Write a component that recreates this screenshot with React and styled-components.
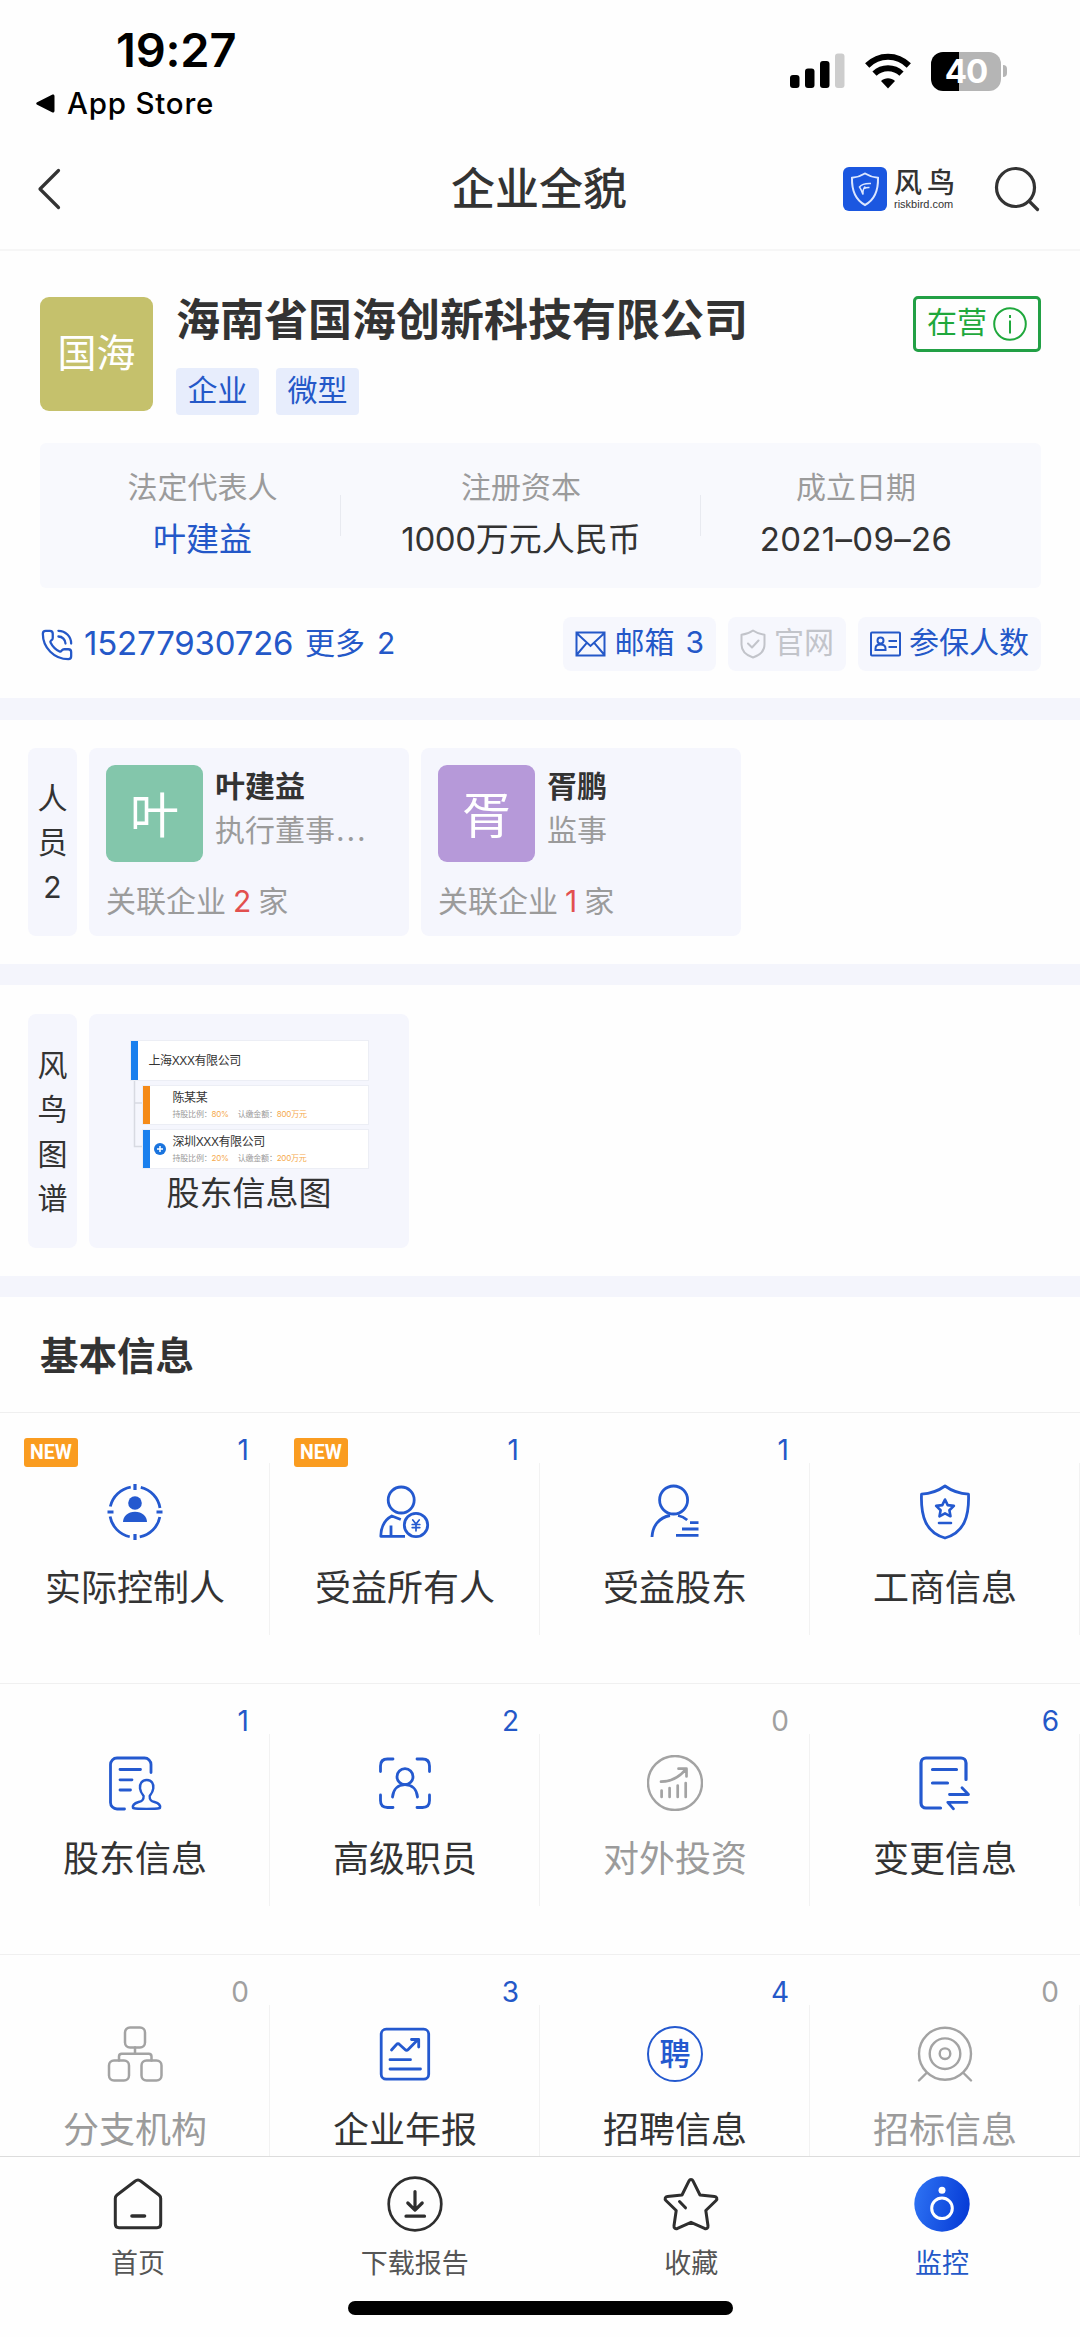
import React from 'react'
import styled, { createGlobalStyle } from 'styled-components'
import { PhoneCall } from 'lucide-react'

const BLUE = '#2458c8'
const GREY = '#9b9b9b'

const people = [
  { short: '叶', name: '叶建益', role: '执行董事', cut: true, count: 2, color: '#83c6ab' },
  { short: '胥', name: '胥鹏', role: '监事', count: 1, color: '#b699d9' },
]

const Icon = ({ children, width = 2.8 }) => (
  <svg width="56" height="56" viewBox="0 0 56 56" fill="none" stroke="currentColor" strokeWidth={width} strokeLinecap="round" strokeLinejoin="round">
    {children}
  </svg>
)

const ControllerIcon = () => (
  <Icon>
    <g strokeLinecap="butt">
      <circle cx="28" cy="28" r="25.3" strokeDasharray="29.44 10.3" strokeDashoffset="-5.15" />
      <path d="M28 0v6M28 50v6M.5 28h6M49.500 28h6" strokeWidth="3.2" />
    </g>
    <circle cx="28" cy="19" r="6.800" fill="currentColor" stroke="none" />
    <path d="M16 38c0-6 5-10.300 12-10.300s12 4.300 12 10.300z" fill="currentColor" stroke="none" />
  </Icon>
)
const OwnerIcon = () => (
  <Icon>
    <circle cx="24.200" cy="16" r="13" />
    <path d="M28 52.300H3.800C4 43 8 35.500 14.800 32l9 3.500M14 41.500v10" strokeLinecap="butt" />
    <circle cx="39" cy="41" r="11.700" />
    <path d="M35.800 36l3.200 4 3.200-4M35.200 40.500h7.600M35.200 43.600h7.600M39 40.200v6.600" strokeWidth="1.700" />
  </Icon>
)
const HolderIcon = () => (
  <Icon>
    <circle cx="26.600" cy="16" r="14" />
    <g strokeLinecap="butt">
      <path d="M5 53c.5-11 7-19.500 18-21.500M31 31.500c3.500.7 6.500 2.200 9.200 4.500" />
      <path d="M43 38.600h8.500M35 45h16.500M29 51.400h22.500" />
    </g>
  </Icon>
)
const BusinessIcon = () => (
  <Icon>
    <path d="M28 2c-6.500 4.700-14 7.600-23.500 8.200C3.700 32 8.500 48.500 28 54c19.500-5.500 24.300-22 23.500-43.800C42 9.600 34.500 6.700 28 2z" />
    <path d="M28 15.500l2.700 5.600 6.200.8-4.500 4.300 1.100 6.100-5.500-3-5.500 3 1.100-6.100-4.500-4.300 6.200-.8zM22 39h12" strokeWidth="2.600" />
  </Icon>
)
const ShareholderIcon = () => (
  <Icon>
    <path d="M44 17.500V9.500a6.500 6.500 0 0 0-6.500-6.500H10A6.500 6.500 0 0 0 3.500 9.500v38A6.500 6.500 0 0 0 10 54h7.500M13 14.500h20.500M13 24.800h12M13 35h10.500" />
    <path d="M39.800 25c-5 0-7.300 3.800-6.800 8.300.3 3.200 1.700 5.200 3.600 7.700.2 3.500-1 5-5 6-3.500 1-6.500 2.500-5.600 6 5 1.200 22 1.200 27 0 .9-3.500-2-5-5.500-6-4-1-5-2.500-4.800-6 1.900-2.500 3.300-4.500 3.600-7.700.5-4.500-1.500-8.300-6.500-8.300z" strokeWidth="2.400" />
  </Icon>
)
const StaffIcon = () => (
  <Icon>
    <path d="M3.500 16.500V11c0-4.500 2.500-7 7-7H16M40 4h5.500c4.500 0 7 2.500 7 7v5.500M52.500 40v5.500c0 4.500-2.500 7-7 7H40M16 52.500h-5.500c-4.500 0-7-2.500-7-7V40" />
    <circle cx="28" cy="21.700" r="8" />
    <path d="M15.500 42c.8-7.500 5.500-12.300 12.500-12.300S39.700 34.500 40.500 42" />
  </Icon>
)
const InvestIcon = () => (
  <Icon>
    <circle cx="28" cy="28" r="27" strokeWidth="2.400" />
    <path d="M14.600 35.500v6.500M22.600 33v9M30.700 30.500v11.500M38.700 28v14M14 26.700c9 0 17.500-3.500 25-12.500M31.500 13.700h8v7.800" strokeWidth="2.700" />
  </Icon>
)
const ChangeIcon = () => (
  <Icon width={3.200}>
    <path d="M49 24.500V8a5 5 0 0 0-5-5H9a5 5 0 0 0-5 5v40a5 5 0 0 0 5 5h14.500M15.500 14.500h24M15.500 28h15" />
    <path d="M32.500 39.500H51.500L45 32.800M50 47.300H30.800l5.700 6.500" strokeWidth="2.800" />
  </Icon>
)
const BranchIcon = () => (
  <Icon width={2.500}>
    <rect x="18" y="1.500" width="20" height="20" rx="5" />
    <rect x="2" y="34.500" width="20" height="20" rx="5" />
    <rect x="34.500" y="34.500" width="20" height="20" rx="5" />
    <path d="M28 21.500v6M12 34.500v-4c0-2 1-2.800 2.800-2.800H41.700c1.800 0 2.800.8 2.800 2.800v4" />
  </Icon>
)
const ReportIcon = () => (
  <Icon>
    <rect x="4.200" y="3.200" width="47.500" height="50" rx="5" />
    <path d="M14.500 24l5-5.500c1-1.200 2-1.200 3 0l5.500 5c1 1 2.200 1 3.200 0l9.300-9.500M34.500 13.500h7.200v7.500M13 33.700h20.500M13 43h30.500" />
  </Icon>
)
const JobsIcon = () => (
  <JobRing>聘</JobRing>
)
const BidIcon = () => (
  <Icon width={2.400}>
    <circle cx="28" cy="27.700" r="26" />
    <circle cx="28" cy="27.700" r="15.300" />
    <circle cx="28" cy="27.700" r="5.300" />
    <path d="M9.500 47l-7.500 7.500M46.500 47l7.500 7.500" />
  </Icon>
)

const modules = [
  { label: '实际控制人', count: 1, icon: ControllerIcon, isNew: true },
  { label: '受益所有人', count: 1, icon: OwnerIcon, isNew: true },
  { label: '受益股东', count: 1, icon: HolderIcon },
  { label: '工商信息', icon: BusinessIcon },
  { label: '股东信息', count: 1, icon: ShareholderIcon },
  { label: '高级职员', count: 2, icon: StaffIcon },
  { label: '对外投资', count: 0, icon: InvestIcon },
  { label: '变更信息', count: 6, icon: ChangeIcon },
  { label: '分支机构', count: 0, icon: BranchIcon },
  { label: '企业年报', count: 3, icon: ReportIcon },
  { label: '招聘信息', count: 4, icon: JobsIcon },
  { label: '招标信息', count: 0, icon: BidIcon },
]

const tabs = [
  {
    label: '首页',
    icon: (
      <Icon width={3}>
        <path d="M25 5.200L7 19c-1.200 1-1.700 2-1.700 3.500V48c0 2.500 1.200 3.700 3.700 3.700h38c2.500 0 3.700-1.200 3.700-3.700V22.500c0-1.500-.5-2.500-1.700-3.500L31 5.200c-2-1.600-4-1.600-6 0z" />
        <path d="M22 40h12.500" strokeWidth="3.600" />
      </Icon>
    ),
  },
  {
    label: '下载报告',
    icon: (
      <Icon width={2.700}>
        <circle cx="28" cy="28" r="26.300" />
        <path d="M28 15.500V34M20.800 27l7.200 7.200 7.200-7.200M19 40.200h18.500" strokeWidth="3.200" />
      </Icon>
    ),
  },
  {
    label: '收藏',
    icon: (
      <Icon width={3}>
        <path d="M26 4.800c.9-1.800 3.100-1.800 4 0l7 14.200 14.600 1.400c2.200.3 3 2.600 1.500 4.100L42.800 34.500l2.200 15.300c.3 2.200-1.500 3.500-3.500 2.500L28 46.300l-13.500 6c-2 1-3.800-.3-3.500-2.500l2.200-15.300L2.900 24.500c-1.500-1.500-.7-3.800 1.500-4.100l14.600-1.400zM16.500 25.500l6 6.300" />
      </Icon>
    ),
  },
  {
    label: '监控',
    active: true,
    icon: (
      <svg width="56" height="56" viewBox="0 0 56 56">
        <defs>
          <linearGradient id="monitor" x1="0" y1="0.400" x2="1" y2="0.600">
            <stop offset="0" stopColor="#2c70f2" />
            <stop offset="1" stopColor="#063bd6" />
          </linearGradient>
        </defs>
        <circle cx="28" cy="28" r="27.700" fill="url(#monitor)" />
        <circle cx="28" cy="14.300" r="3.500" fill="#fff" />
        <circle cx="28" cy="32.300" r="10.300" fill="none" stroke="#fff" strokeWidth="3" />
      </svg>
    ),
  },
]

const StatusIcons = () => (
  <SystemIcons>
    <svg width="55" height="36" viewBox="0 0 55 36">
      <rect x="0" y="22" width="9.500" height="13" rx="3" />
      <rect x="15" y="15.500" width="9.500" height="19.500" rx="3" />
      <rect x="30" y="8" width="9.500" height="27" rx="3" />
      <rect x="45" y=".5" width="9.500" height="34.500" rx="3" fill="#cdcdcd" />
    </svg>
    <svg width="46" height="36" viewBox="0 0 46 36" fill="none" stroke="#000" strokeWidth="6">
      <path d="M2.200 12.500C14 .8 32 .8 43.800 12.500" />
      <path d="M9.500 20.700c7.500-7.300 19.500-7.300 27 0" />
      <path d="M23 35.500l-7-7.500c4-3.700 10-3.700 14 0z" fill="#000" stroke="none" />
    </svg>
    <BatteryWrap>
      <Battery>40</Battery>
      <BatteryTip />
    </BatteryWrap>
  </SystemIcons>
)

const PersonCard = ({ person }) => (
  <Card>
    <PersonTop>
      <Avatar $color={person.color}>{person.short}</Avatar>
      <div>
        <PersonName>{person.name}</PersonName>
        <PersonRole>
          {person.role}
          {person.cut && <Dots>...</Dots>}
        </PersonRole>
      </div>
    </PersonTop>
    <Related>
      关联企业<b>{person.count}</b>家
    </Related>
  </Card>
)

const SubLine = ({ percent, amount }) => (
  <ThumbSub>
    <span>持股比例：<em>{percent}</em></span>
    <span>认缴金额：<em>{amount}</em></span>
  </ThumbSub>
)

const ShareholderThumb = () => (
  <Thumb>
    <ThumbRow $color="#1a80ee">
      <ThumbName>上海XXX有限公司</ThumbName>
    </ThumbRow>
    <ThumbTree>
      <svg width="12" height="82" viewBox="0 0 12 82" fill="none" stroke="#d8dae2" strokeWidth="1.500">
        <path d="M3.500 0v66.500h8M3.500 23h8" />
      </svg>
      <ThumbRows>
        <ThumbRow $color="#f58a17" $inner>
          <ThumbName>陈某某</ThumbName>
          <SubLine percent="80%" amount="800万元" />
        </ThumbRow>
        <ThumbRow $color="#1a80ee" $inner>
          <Plus>
            <svg width="12" height="12" viewBox="0 0 12 12">
              <circle cx="6" cy="6" r="6" fill="#1a74de" />
              <path d="M6 3v6M3 6h6" stroke="#fff" strokeWidth="1.500" />
            </svg>
          </Plus>
          <ThumbName>深圳XXX有限公司</ThumbName>
          <SubLine percent="20%" amount="200万元" />
        </ThumbRow>
      </ThumbRows>
    </ThumbTree>
  </Thumb>
)

const App = () => (
  <Screen>
    <GlobalStyle />
    <StatusBar>
      <div>
        <Time>19:27</Time>
        <BackTo>
          <svg width="19" height="19" viewBox="0 0 19 19">
            <path d="M1.200 8.200L16 .8c1.500-.7 2.500 0 2.500 1.500v14.500c0 1.500-1 2.200-2.500 1.500L1.200 10.800c-1.300-.8-1.300-1.900 0-2.600z" />
          </svg>
          App Store
        </BackTo>
      </div>
      <StatusIcons />
    </StatusBar>

    <Header>
      <HeaderSide>
        <svg width="24" height="42" viewBox="0 0 24 42" fill="none" stroke="#333" strokeWidth="3.200" strokeLinecap="round" strokeLinejoin="round">
          <path d="M21.500 2.500L3 21l18.500 18.500" />
        </svg>
      </HeaderSide>
      <Title>企业全貌</Title>
      <HeaderSide $end>
        <svg width="44" height="44" viewBox="0 0 44 44" fill="none">
          <rect width="44" height="44" rx="6" fill="#1b57e0" />
          <path d="M22 6.500c-4 2.500-8 3.800-13 4.300C8.700 22 11.500 32.500 22 38c10.500-5.500 13.300-16 13-27.200-5-.5-9-1.800-13-4.300z" stroke="#dbe6ff" strokeWidth="2" />
          <path d="M28 16.500c-6-.3-9.500.8-11.500 3.500 1.500 2 2.300 4 3.500 7.500-.3-4 .5-6.500 2.300-8M21 21.500c2-1 3.500-1.200 5.500-1" stroke="#dbe6ff" strokeWidth="1.500" />
        </svg>
        <Brand>
          <BrandName>风鸟</BrandName>
          <BrandUrl>riskbird.com</BrandUrl>
        </Brand>
        <svg width="47" height="46" viewBox="0 0 47 46" fill="none" stroke="#333" strokeWidth="3.200" strokeLinecap="round">
          <circle cx="21.500" cy="21.500" r="19" />
          <path d="M35.500 35.500l8 8" />
        </svg>
      </HeaderSide>
    </Header>

    <Content>
      <Company>
        <CompanyHead>
          <CompanyLogo>国海</CompanyLogo>
          <CompanyMain>
            <CompanyName>海南省国海创新科技有限公司</CompanyName>
            <Tags>
              <Tag>企业</Tag>
              <Tag>微型</Tag>
            </Tags>
          </CompanyMain>
          <Status>
            <StatusText>在营</StatusText>
            <svg width="34" height="34" viewBox="0 0 34 34" fill="none" stroke="currentColor" strokeWidth="2">
              <circle cx="17" cy="17" r="15.800" />
              <path d="M17 13.500v13M17 8v3" />
            </svg>
          </Status>
        </CompanyHead>

        <Facts>
          <Fact>
            <FactLabel>法定代表人</FactLabel>
            <FactValue $link>叶建益</FactValue>
          </Fact>
          <Fact>
            <FactLabel>注册资本</FactLabel>
            <FactValue><Amount>1000</Amount>万元人民币</FactValue>
          </Fact>
          <Fact>
            <FactLabel>成立日期</FactLabel>
            <FactValue $date>2021–09–26</FactValue>
          </Fact>
        </Facts>

        <Contacts>
          <Phone>
            <PhoneCall size={34} strokeWidth={1.600} />
            <PhoneNumber>15277930726</PhoneNumber>
            <More>更多<i>2</i></More>
          </Phone>
          <Chip>
            <svg width="31" height="26" viewBox="0 0 31 26" fill="none" stroke="currentColor" strokeWidth="2">
              <path d="M1.500 1.500h28v23h-28zM1.500 2l14 13 14-13M1.500 24l10.300-12.200M29.500 24L19.200 11.800" />
            </svg>
            <ChipText>邮箱<i>3</i></ChipText>
          </Chip>
          <Chip $disabled>
            <svg width="26" height="30" viewBox="0 0 26 30" fill="none" stroke="currentColor" strokeWidth="2" strokeLinecap="round" strokeLinejoin="round">
              <path d="M13 1.500C9.500 4 6 5.300 1.500 5.700v9.800c0 6 4 10.500 11.500 13 7.500-2.500 11.500-7 11.500-13V5.700C20 5.300 16.500 4 13 1.500zM8 14.500l4 4 6.500-7" />
            </svg>
            <ChipText>官网</ChipText>
          </Chip>
          <Chip>
            <svg width="31" height="26" viewBox="0 0 31 26" fill="none" stroke="currentColor" strokeWidth="2">
              <rect x="1" y="1.500" width="29" height="23" rx="1" />
              <circle cx="10.500" cy="9.500" r="3" />
              <path d="M5.500 19v-1.500c0-2.500 2-4 5-4s5 1.500 5 4V19zM18.500 10h8.500M18.500 16h8.500" />
            </svg>
            <ChipText>参保人数</ChipText>
          </Chip>
        </Contacts>
      </Company>

      <Band $height={22} />

      <Section>
        <SideLabel>
          <span>人</span>
          <span>员</span>
          <span>2</span>
        </SideLabel>
        {people.map((person) => (
          <PersonCard key={person.name} person={person} />
        ))}
      </Section>

      <Band $height={21} />

      <Section $tall>
        <SideLabel>
          <span>风</span>
          <span>鸟</span>
          <span>图</span>
          <span>谱</span>
        </SideLabel>
        <ChartCard>
          <ShareholderThumb />
          <ChartName>股东信息图</ChartName>
        </ChartCard>
      </Section>

      <Band $height={21} />

      <SectionTitle>基本信息</SectionTitle>
      <Grid>
        {modules.map(({ label, count, icon: ModuleIcon, isNew }) => (
          <Cell key={label} $empty={count === 0}>
            {isNew && <NewBadge>NEW</NewBadge>}
            {count !== undefined && <Count $empty={count === 0}>{count}</Count>}
            <CellIcon $empty={count === 0}>
              <ModuleIcon />
            </CellIcon>
            <CellLabel>{label}</CellLabel>
          </Cell>
        ))}
      </Grid>
    </Content>

    <TabBar>
      <Tabs>
        {tabs.map((tab) => (
          <Tab key={tab.label}>
            {tab.icon}
            <TabLabel $active={tab.active}>{tab.label}</TabLabel>
          </Tab>
        ))}
      </Tabs>
      <HomeIndicator />
    </TabBar>
  </Screen>
)

export default App

const GlobalStyle = createGlobalStyle`
* {
  box-sizing: border-box;
}
body {
  margin: 0;
  background: #fff;
}
svg {
  display: block;
  flex: none;
}
i, em {
  font-style: normal;
}
`
const Screen = styled.div`
width: 1080px;
height: 2337px;
display: flex;
flex-direction: column;
overflow: hidden;
background: #fefefe;
color: #333;
font-family: Inter, "Noto Sans CJK SC", sans-serif;
white-space: nowrap;
`
const StatusBar = styled.div`
height: 126px;
flex: none;
display: flex;
justify-content: space-between;
padding: 25px 73px 0 36px;
color: #000;
`
const Time = styled.div`
padding-left: 80px;
font-size: 47px;
font-weight: 600;
line-height: 50px;
letter-spacing: -0.2px;
`
const BackTo = styled.div`
display: flex;
align-items: center;
gap: 12px;
margin-top: 13px;
font-size: 29.500px;
font-weight: 500;
line-height: 30px;
letter-spacing: 0.8px;
`
const SystemIcons = styled.div`
display: flex;
align-items: center;
gap: 20px;
height: 42px;
margin-top: 25px;
`
const BatteryWrap = styled.div`
display: flex;
align-items: center;
gap: 2px;
`
const Battery = styled.div`
width: 70px;
height: 39px;
border-radius: 12px;
background: linear-gradient(90deg, #000 40%, #b5b5b5 40%);
color: #fff;
font-size: 33px;
font-weight: 700;
line-height: 39px;
text-align: center;
letter-spacing: -1px;
`
const BatteryTip = styled.div`
width: 4px;
height: 12px;
border-radius: 0 5px 5px 0;
background: #b5b5b5;
`
const Header = styled.div`
height: 125px;
flex: none;
display: grid;
grid-template-columns: 1fr auto 1fr;
align-items: center;
padding: 2px 39px 0 37px;
border-bottom: 2px solid #f6f6f6;
`
const HeaderSide = styled.div`
display: flex;
align-items: center;
justify-content: ${({ $end }) => ($end ? 'flex-end' : 'flex-start')};
`
const Title = styled.div`
font-size: 44px;
font-weight: 500;
line-height: 60px;
`
const Brand = styled.div`
width: 62px;
margin: 0 38px 0 7px;
`
const BrandName = styled.div`
font-size: 28px;
font-weight: 500;
line-height: 30px;
letter-spacing: 5px;
`
const BrandUrl = styled.div`
font-family: "Liberation Sans", sans-serif;
font-size: 11px;
line-height: 12px;
`
const Content = styled.div`
flex: 1;
min-height: 0;
overflow: hidden;
`
const Company = styled.div`
padding: 46px 39px 27px 40px;
`
const CompanyHead = styled.div`
display: flex;
align-items: flex-start;
height: 118px;
`
const CompanyLogo = styled.div`
width: 113px;
height: 114px;
border-radius: 9px;
background: #c5c16c;
color: #fff;
font-size: 39px;
line-height: 112px;
text-align: center;
`
const CompanyMain = styled.div`
flex: 1;
margin-left: 23px;
`
const CompanyName = styled.div`
font-size: 44px;
font-weight: 600;
line-height: 47px;
`
const Tags = styled.div`
display: flex;
gap: 17px;
margin-top: 24px;
`
const Tag = styled.div`
width: 83px;
height: 47px;
border-radius: 4px;
background: #e7edfc;
color: ${BLUE};
font-size: 30px;
line-height: 45px;
text-align: center;
`
const Status = styled.div`
display: flex;
align-items: center;
justify-content: center;
gap: 6px;
width: 128px;
height: 56px;
margin-top: -1px;
border: 3px solid #22a045;
border-radius: 5px;
color: #1fa83c;
`
const StatusText = styled.span`
padding-bottom: 4px;
font-size: 30px;
line-height: 46px;
`
const Facts = styled.div`
height: 145px;
display: grid;
grid-template-columns: 277px 360px 310px;
margin-top: 28px;
padding: 24px 0 0 24px;
border-radius: 6px;
background: #f8f9fd;
`
const Fact = styled.div`
text-align: center;
background: linear-gradient(#e8eaf0, #e8eaf0) right 28px / 1px 41px no-repeat;
&:last-child {
  background: none;
}
`
const FactLabel = styled.div`
color: ${GREY};
font-size: 30px;
line-height: 40px;
`
const FactValue = styled.div`
margin-top: 12px;
color: ${({ $link }) => ($link ? BLUE : '#333')};
font-size: 33px;
line-height: 40px;
letter-spacing: ${({ $date }) => ($date ? '0.300px' : '0')};
`
const Amount = styled.span`
letter-spacing: -0.400px;
`
const Contacts = styled.div`
display: flex;
align-items: center;
gap: 12px;
height: 54px;
margin-top: 29px;
`
const Phone = styled.div`
flex: 1;
display: flex;
align-items: center;
color: ${BLUE};
svg {
  margin-top: 2px;
}
`
const PhoneNumber = styled.div`
width: 210px;
margin-left: 10px;
padding-bottom: 2px;
font-size: 33px;
line-height: 50px;
letter-spacing: -0.200px;
`
const More = styled.div`
margin-left: 11px;
padding-bottom: 3px;
font-size: 30px;
line-height: 50px;
i {
  margin-left: 12px;
}
`
const Chip = styled.div`
display: flex;
align-items: center;
justify-content: center;
gap: 8px;
height: 54px;
padding: 0 12px;
border-radius: 8px;
background: #f6f7fd;
color: ${({ $disabled }) => ($disabled ? '#c2c4ca' : BLUE)};
`
const ChipText = styled.span`
padding-bottom: 4px;
font-size: 30px;
line-height: 50px;
i {
  margin-left: 11px;
}
`
const Band = styled.div`
height: ${({ $height }) => $height}px;
background: #f4f5fc;
`
const Section = styled.div`
display: flex;
gap: 12px;
height: ${({ $tall }) => ($tall ? 291 : 244)}px;
padding: ${({ $tall }) => ($tall ? 29 : 28)}px 28px 28px;
`
const SideLabel = styled.div`
width: 49px;
display: flex;
flex-direction: column;
align-items: center;
justify-content: center;
padding-top: 1px;
border-radius: 8px;
background: #f5f6fd;
font-size: 30px;
line-height: 44.500px;
`
const Card = styled.div`
width: 320px;
padding: 17px;
border-radius: 8px;
background: #f5f6fd;
`
const PersonTop = styled.div`
display: flex;
gap: 12px;
`
const Avatar = styled.div`
width: 97px;
height: 97px;
border-radius: 9px;
background: ${({ $color }) => $color};
color: #fff;
font-size: 49px;
line-height: 101px;
text-align: center;
`
const PersonName = styled.div`
font-size: 30px;
font-weight: 600;
line-height: 43px;
`
const PersonRole = styled.div`
color: ${GREY};
font-size: 30px;
line-height: 44px;
`
const Dots = styled.span`
margin-left: 1px;
letter-spacing: 1.900px;
`
const Related = styled.div`
margin-top: 19px;
color: ${GREY};
font-size: 30px;
line-height: 40px;
b {
  margin: 0 7px;
  color: #e2504f;
  font-weight: 400;
}
`
const ChartCard = styled.div`
width: 320px;
display: flex;
flex-direction: column;
align-items: center;
padding-top: 27px;
border-radius: 8px;
background: #f5f6fd;
`
const ChartName = styled.div`
margin-top: 4px;
font-size: 33px;
line-height: 42px;
`
const Thumb = styled.div`
width: 237px;
`
const ThumbTree = styled.div`
display: flex;
height: 88px;
`
const ThumbRows = styled.div`
flex: 1;
display: flex;
flex-direction: column;
gap: 6px;
padding-top: 6px;
`
const ThumbRow = styled.div`
position: relative;
height: ${({ $inner }) => ($inner ? 38 : 39)}px;
display: flex;
flex-direction: column;
justify-content: center;
padding-left: ${({ $inner }) => ($inner ? 30 : 18)}px;
background: linear-gradient(90deg, ${({ $color }) => $color} 7px, #fff 7px);
box-shadow: 0 0 0 1px #eceef5;
`
const ThumbName = styled.div`
font-family: "Liberation Sans", "Noto Sans CJK SC", sans-serif;
font-size: 12px;
line-height: 18px;
letter-spacing: -0.400px;
`
const ThumbSub = styled.div`
display: flex;
gap: 9px;
color: #999;
font-size: 8px;
line-height: 14px;
letter-spacing: -0.200px;
em {
  color: #f5a94c;
}
`
const Plus = styled.div`
position: absolute;
left: 11px;
top: 13px;
`
const SectionTitle = styled.div`
height: 116px;
padding-left: 40px;
border-bottom: 1px solid #efefef;
font-size: 38.500px;
font-weight: 600;
line-height: 119px;
`
const Grid = styled.div`
display: grid;
grid-template-columns: repeat(4, 270px);
`
const Cell = styled.div`
position: relative;
height: 271px;
display: flex;
flex-direction: column;
align-items: center;
padding-top: 71px;
border-bottom: 1px solid #f0f0f0;
background: linear-gradient(#f2f2f2, #f2f2f2) right 50px / 1px 172px no-repeat;
color: ${({ $empty }) => ($empty ? '#9b9b9b' : '#333')};
`
const Count = styled.div`
position: absolute;
top: 21px;
right: 21px;
color: ${({ $empty }) => ($empty ? '#a0a0a0' : BLUE)};
font-size: 28px;
line-height: 33px;
`
const NewBadge = styled.div`
position: absolute;
top: 25px;
left: 24px;
width: 54px;
height: 29px;
border-radius: 3px;
background: #fa9c20;
color: #fff;
font-family: Roboto, sans-serif;
font-size: 19.500px;
font-weight: 700;
line-height: 30px;
text-align: center;
`
const CellIcon = styled.div`
color: ${({ $empty }) => ($empty ? '#a3a3a3' : '#2459cf')};
`
const CellLabel = styled.div`
margin-top: 26px;
font-size: 36px;
line-height: 44px;
`
const JobRing = styled.div`
width: 56px;
height: 56px;
border: 2.500px solid currentColor;
border-radius: 50%;
font-size: 31px;
font-weight: 500;
line-height: 51px;
text-align: center;
`
const TabBar = styled.div`
height: 181px;
flex: none;
padding-top: 19px;
border-top: 1px solid #dcdcdc;
`
const Tabs = styled.div`
display: flex;
justify-content: space-between;
padding: 0 110px;
`
const Tab = styled.div`
display: flex;
flex-direction: column;
align-items: center;
color: #2e2e2e;
`
const TabLabel = styled.div`
margin-top: 15px;
color: ${({ $active }) => ($active ? BLUE : '#555')};
font-size: 27px;
line-height: 34px;
`
const HomeIndicator = styled.div`
width: 385px;
height: 14px;
margin: 20px auto 0;
border-radius: 7px;
background: #000;
`
